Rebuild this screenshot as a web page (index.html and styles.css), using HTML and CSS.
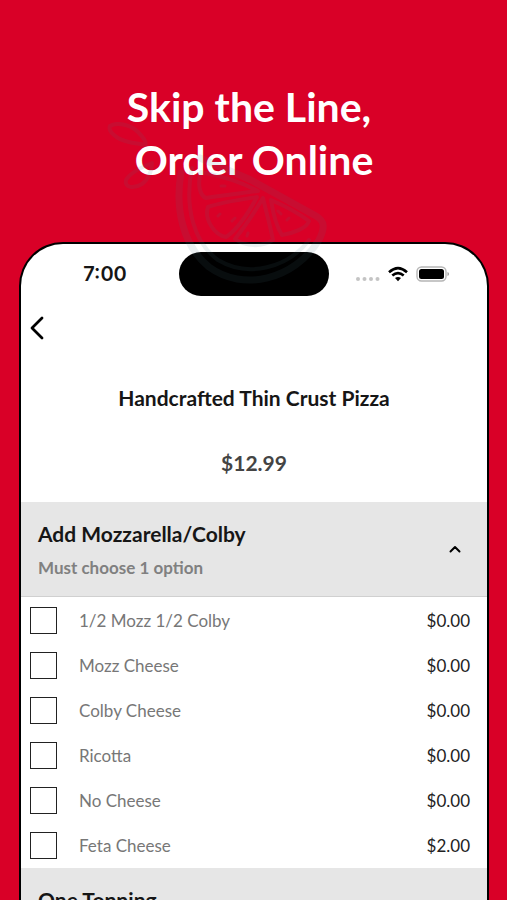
FILE: index.html
```
<!DOCTYPE html>
<html lang="en">
<head>
  <meta charset="UTF-8">
  <meta name="viewport" content="width=device-width, initial-scale=1.0">
  <title>Skip the Line, Order Online</title>
  <link rel="stylesheet" href="styles.css">
</head>
<body>
  <div class="promo">
    <h1 class="promo__title">Skip the Line,&nbsp;<br>Order Online</h1>

    <div class="phone">
      <div class="status-bar">
        <div class="status-bar__time">7:00</div>
        <div class="status-bar__island"></div>
        <div class="status-bar__icons">
          <svg class="icon-signal" width="24" height="6" viewBox="0 0 24 6" fill="#c4c4c4">
            <circle cx="2" cy="3" r="2"/><circle cx="8.5" cy="3" r="2"/><circle cx="15" cy="3" r="2"/><circle cx="21.5" cy="3" r="2"/>
          </svg>
          <svg width="20" height="16" viewBox="0 0 20 16" fill="none" stroke="#000" stroke-width="2.6">
            <path d="M1 6.2Q10-2 19 6.2"/>
            <path d="M4.3 9.6Q10 4.6 15.7 9.6"/>
            <path d="M7 12Q10 9.8 13 12L10 15.2Z" fill="#000" stroke="none"/>
          </svg>
          <svg width="34" height="16" viewBox="0 0 34 16">
            <rect x="1" y="1" width="29" height="14" rx="4.5" fill="none" stroke="#b5b5b5" stroke-width="1.4"/>
            <rect x="3" y="3" width="25" height="10" rx="2.5"/>
            <path d="M31.5 6q1.5 .6 1.5 2t-1.5 2z" fill="#999"/>
          </svg>
        </div>
      </div>

      <button class="back-button" aria-label="Back">
        <svg width="16" height="24" viewBox="0 0 16 24" fill="none" stroke="#000" stroke-width="2.8" stroke-linecap="round" stroke-linejoin="round">
          <path d="M13 2L3 12L13 22"/>
        </svg>
      </button>

      <h2 class="item-name">Handcrafted Thin Crust Pizza</h2>
      <div class="item-price">$12.99</div>

      <button class="group-header" aria-expanded="true">
        <span class="group-header__text">
          <span class="group-header__title">Add Mozzarella/Colby</span>
          <span class="group-header__hint">Must choose 1 option</span>
        </span>
        <svg width="12" height="8" viewBox="0 0 12 8" fill="none" stroke="#000" stroke-width="2" stroke-linecap="round" stroke-linejoin="round">
          <path d="M1.5 6.5L6 2L10.5 6.5"/>
        </svg>
      </button>

      <div class="options">
        <label class="option"><input class="option__box" type="checkbox"><span class="option__name">1/2 Mozz 1/2 Colby</span><span class="option__price">$0.00</span></label>
        <label class="option"><input class="option__box" type="checkbox"><span class="option__name">Mozz Cheese</span><span class="option__price">$0.00</span></label>
        <label class="option"><input class="option__box" type="checkbox"><span class="option__name">Colby Cheese</span><span class="option__price">$0.00</span></label>
        <label class="option"><input class="option__box" type="checkbox"><span class="option__name">Ricotta</span><span class="option__price">$0.00</span></label>
        <label class="option"><input class="option__box" type="checkbox"><span class="option__name">No Cheese</span><span class="option__price">$0.00</span></label>
        <label class="option"><input class="option__box" type="checkbox"><span class="option__name">Feta Cheese</span><span class="option__price">$2.00</span></label>
      </div>

      <button class="group-header">
        <span class="group-header__text">
          <span class="group-header__title">One Topping</span>
        </span>
      </button>
    </div>

    <!-- faint fruit slice over the title and phone -->
    <svg class="watermark" width="230" height="180" viewBox="100 110 230 180" fill="none" stroke="#4a7484" stroke-width="4" stroke-linecap="round" stroke-linejoin="round">
      <path d="M110 126C116 122 130 124 138 132C144 138 147 143 145 145C136 143 126 143 118 138C112 134 108 130 110 126Z"/>
      <path d="M152 163C142 167 130 173 126 180C124 188 134 189 142 184C149 179 152 170 152 163Z"/>
      <path stroke-width="7" d="M181 173C175 207 182 245 209 267C243 292 294 280 319 240C325 228 325 221 316 216L251 180L200 158"/>
      <path d="M192 168C184 207 194 243 218 260C248 278 288 268 309 240"/>
      <path d="M201 172C197 184 200 196 206 198C221 195 244 193 258 191C243 183 222 176 201 172Z"/>
      <path d="M208 207C222 202 244 199 257 197C250 210 238 229 226 237C214 235 204 219 208 207Z"/>
      <path d="M263 198C254 213 244 228 235 239C246 247 262 247 273 240C270 225 266 211 263 198Z"/>
      <path d="M271 200C273 213 276 226 282 235C294 233 307 228 309 221C298 213 285 206 271 200Z"/>
      <path stroke-width="3" d="M221 186h4M218 216l2-2M247 236l1-3M278 211l3 3M287 220l2-2M232 221l3-3"/>
    </svg>
  </div>
</body>
</html>
```
FILE: styles.css
```
* {
  box-sizing: border-box;
}

body {
  margin: 0;
  background: #d90027;
  color: #161616;
  font-family: Lato, "Liberation Sans", sans-serif;
}

button {
  border: 0;
  background: none;
  font-family: inherit;
  color: inherit;
  cursor: pointer;
}

.promo {
  position: relative;
  height: 100vh;
  overflow: hidden;
  padding: 80px 18px 0 19px;
}

.promo__title {
  margin: 0 0 56px;
  color: #fff;
  font-size: 41px;
  font-weight: 700;
  line-height: 53px;
  text-align: center;
}

.phone {
  border: 2px solid #000;
  border-bottom: 0;
  border-radius: 44px 44px 0 0;
  background: #fff;
  overflow: hidden;
}

/* Status bar */
.status-bar {
  display: grid;
  grid-template-columns: 1fr 150px 1fr;
  align-items: center;
  padding-top: 8px;
}

.status-bar__time {
  padding-left: 10px;
  font-family: Inter, sans-serif;
  font-size: 20px;
  font-weight: 600;
  text-align: center;
}

.status-bar__island {
  height: 44px;
  border-radius: 22px;
  background: #000;
}

.status-bar__icons {
  display: flex;
  align-items: center;
  justify-content: flex-end;
  gap: 8px;
  padding-right: 37px;
}

.icon-signal {
  margin-top: 10px;
}

/* Item */
.back-button {
  display: block;
  margin: 20px 0 0 8px;
  padding: 0;
  height: 24px;
}

.item-name {
  margin: 44px 0 0;
  font-size: 21px;
  line-height: 28px;
  text-align: center;
}

.item-price {
  margin: 36px 0 24px;
  color: #444;
  font-size: 21px;
  font-weight: 700;
  line-height: 30px;
  text-align: center;
}

.group-header {
  display: flex;
  align-items: center;
  justify-content: space-between;
  width: 100%;
  height: 95px;
  padding: 0 26px 0 17px;
  border-bottom: 1px solid #d0d0d0;
  background: #e6e6e6;
  text-align: left;
}

.group-header__text {
  display: flex;
  flex-direction: column;
  align-self: flex-start;
  gap: 8px;
  padding-top: 18px;
}

.group-header__title {
  font-size: 21px;
  font-weight: 700;
  line-height: 28px;
}

.group-header__hint {
  color: #808080;
  font-size: 17px;
  font-weight: 700;
  line-height: 24px;
}

/* Options */
.options {
  padding-top: 1px;
}

.option {
  display: flex;
  align-items: center;
  height: 45px;
  padding: 0 17px 0 9px;
  font-size: 17px;
}

.option__box {
  appearance: none;
  width: 27px;
  height: 27px;
  margin: 0 22px 0 0;
  border: 1px solid #222;
  background: #fff;
}

.option__box:checked {
  background: #d90027;
}

.option__name {
  flex: 1;
  color: #777;
}

.option__price {
  color: #222;
}

.watermark {
  position: absolute;
  top: 110px;
  left: 100px;
  opacity: .11;
  pointer-events: none;
}
```
